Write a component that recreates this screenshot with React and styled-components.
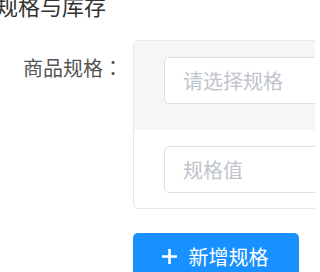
import React from "react";
import styled, { createGlobalStyle } from "styled-components";

const Global = createGlobalStyle`
  html, body { margin: 0; padding: 0; background: #fff; overflow: hidden; }
  body { font-family: "Noto Sans CJK SC", "Noto Sans", sans-serif; }
`;

const Page = styled.div`
  width: 315px;
  height: 272px;
  overflow: hidden;
`;

const Title = styled.div`
  margin: -6px 0 0 -4px;
  font-size: 22px;
  line-height: 22px;
  color: #333;
  white-space: nowrap;
`;

const FormRow = styled.div`
  display: flex;
  margin-top: 24px;
`;

const Label = styled.div`
  flex: 0 0 133px;
  box-sizing: border-box;
  padding: 17px 10px 0 0;
  text-align: right;
  font-family: "Noto Sans CJK TC", "Noto Sans CJK SC", sans-serif;
  font-size: 20px;
  line-height: 22px;
  color: #555;
  white-space: nowrap;
`;

const Body = styled.div`
  display: flex;
  flex-direction: column;
  align-items: flex-start;
`;

const Card = styled.div`
  width: 420px;
  border: 1px solid #e8e8e8;
  border-radius: 5px;
  overflow: hidden;
  background: #fff;
`;

const Section = styled.div`
  padding: ${(p) => (p.$head ? "16px 0 26px 30px" : "16px 0 15px 30px")};
  background: ${(p) => (p.$head ? "#f6f6f7" : "#fff")};
`;

const Input = styled.input`
  box-sizing: border-box;
  width: 360px;
  height: 47px;
  padding: 0 18px;
  border: 1px solid #dcdfe6;
  border-radius: 5px;
  background: #fff;
  font-family: "Noto Sans CJK SC", sans-serif;
  font-size: 20px;
  color: #333;
  outline: none;
  &::placeholder { color: #c0c4cc; }
`;

const Button = styled.button`
  margin-top: 24px;
  width: 166px;
  height: 50px;
  border: none;
  border-radius: 5px;
  background: #1890ff;
  color: #fff;
  font-family: "Noto Sans CJK SC", sans-serif;
  font-size: 20px;
  display: flex;
  align-items: center;
  justify-content: center;
  gap: 12px;
  padding: 0 2px 3px 0;
  cursor: pointer;
`;

const Plus = () => (
  <svg width="15" height="15" viewBox="0 0 15 15">
    <path d="M7.5 0v15M0 7.5h15" stroke="#fff" strokeWidth="2.6" />
  </svg>
);

export default function App() {
  return (
    <Page>
      <Global />
      <Title>规格与库存</Title>
      <FormRow>
        <Label>商品规格：</Label>
        <Body>
          <Card>
            <Section $head>
              <Input placeholder="请选择规格" />
            </Section>
            <Section>
              <Input placeholder="规格值" />
            </Section>
          </Card>
          <Button>
            <Plus />
            新增规格
          </Button>
        </Body>
      </FormRow>
    </Page>
  );
}
